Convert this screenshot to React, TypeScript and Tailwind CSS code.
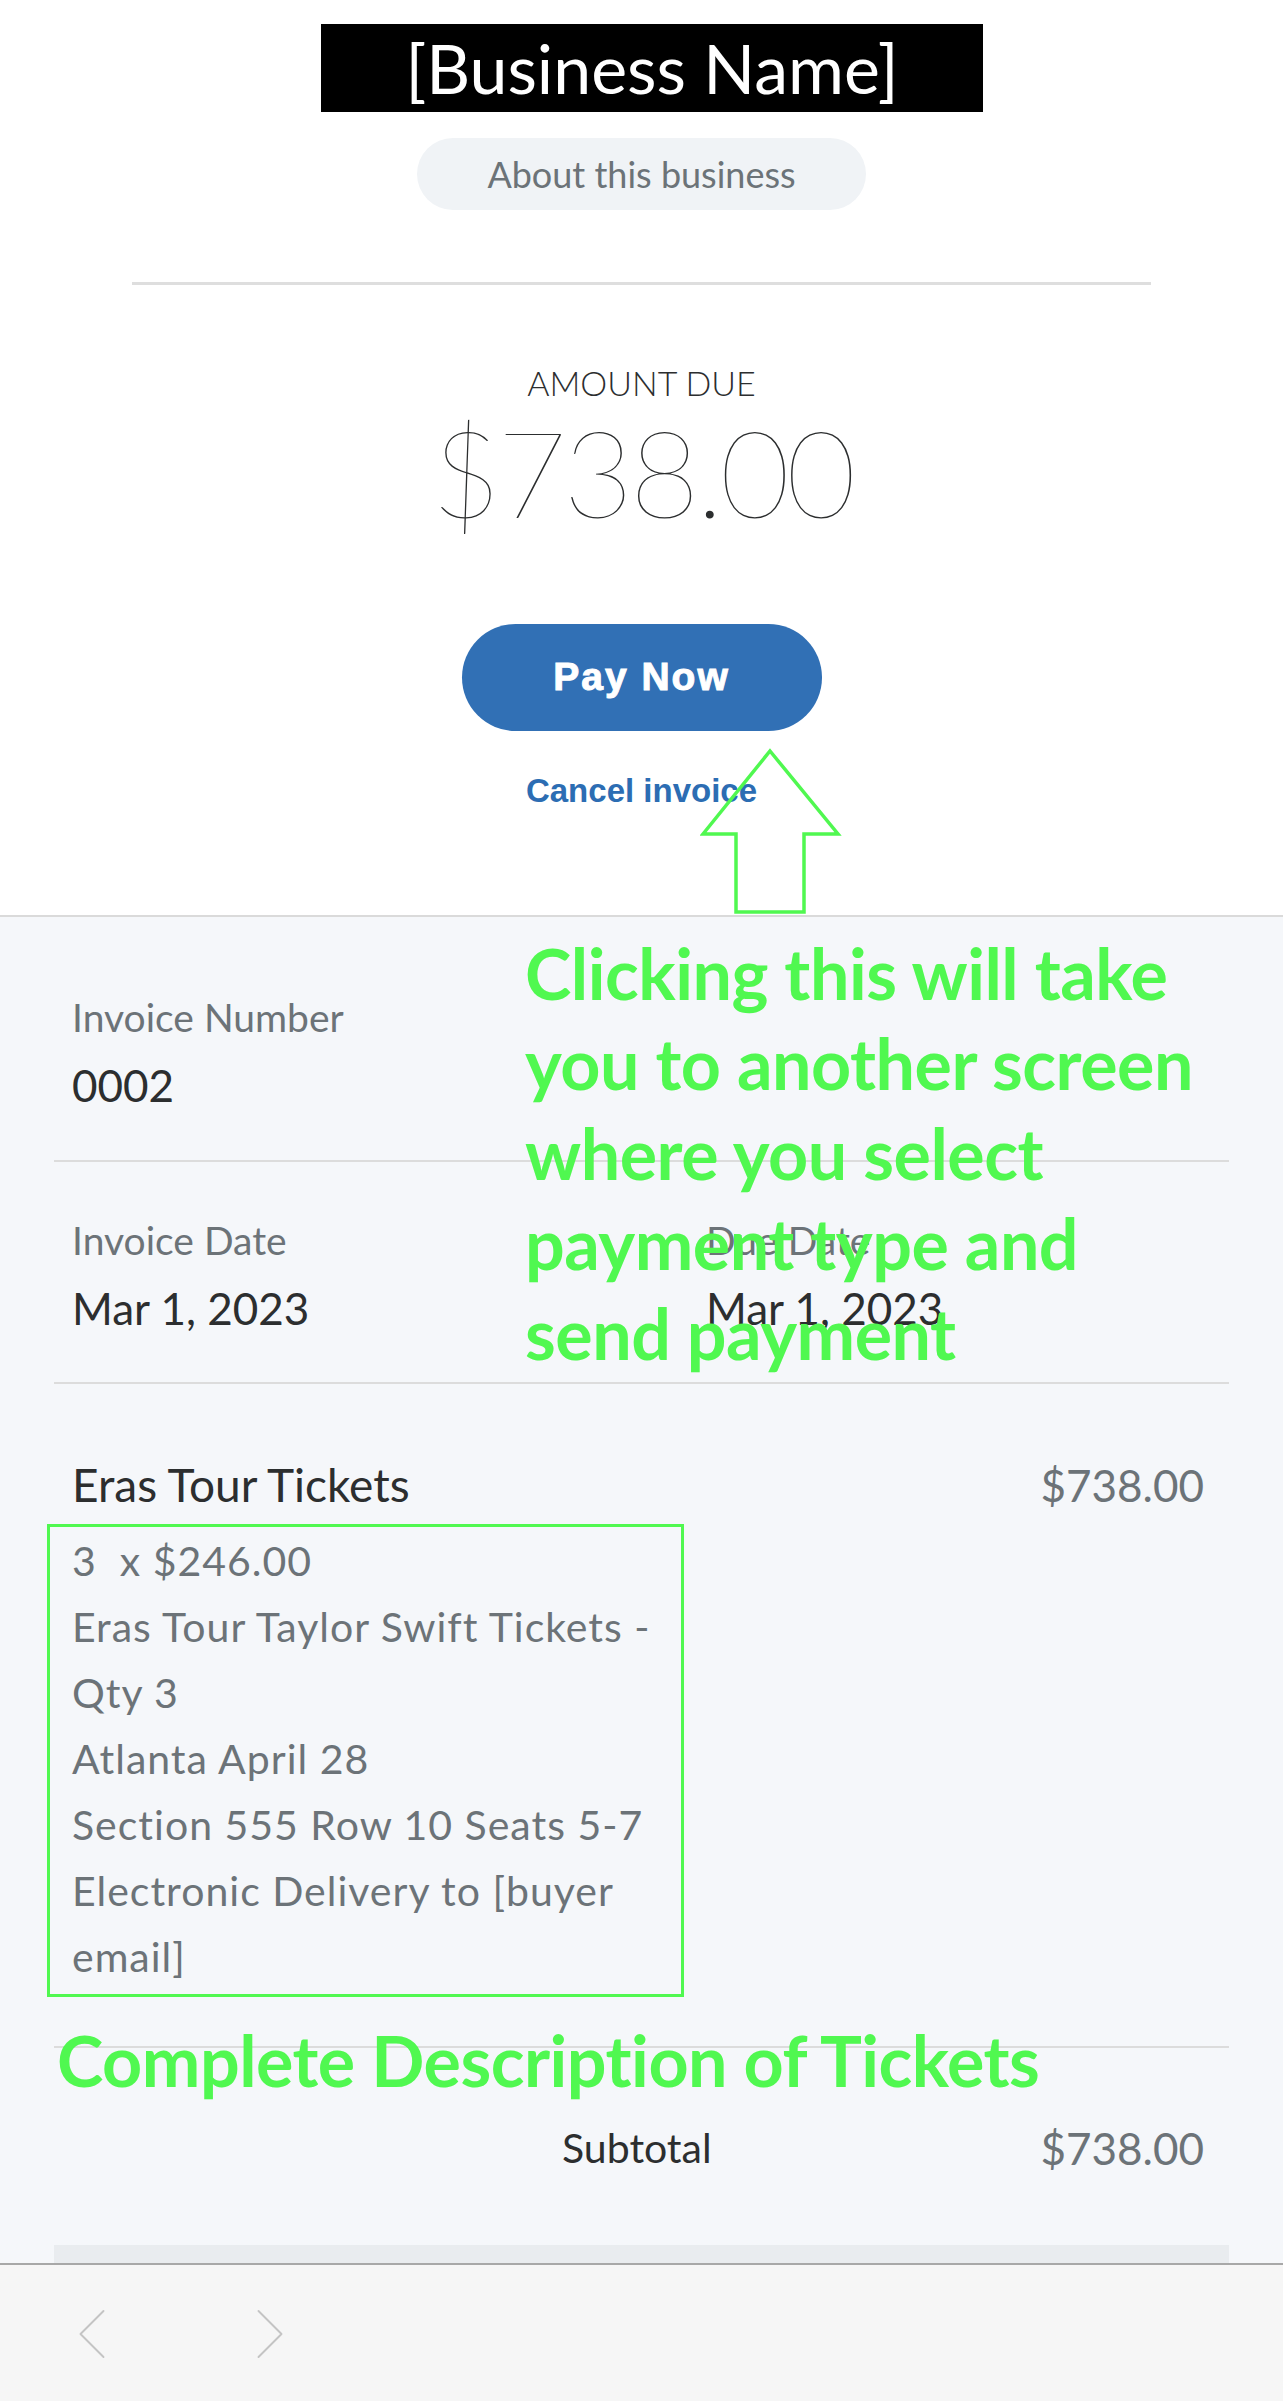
import { ChevronLeft, ChevronRight } from 'lucide-react';

const body = { fontFamily: 'Lato, "Open Sans", sans-serif' };
const arial = { fontFamily: '"Liberation Sans", Arial, sans-serif' };

const lines = [
  '3  x $246.00',
  'Eras Tour Taylor Swift Tickets -',
  'Qty 3',
  'Atlanta April 28',
  'Section 555 Row 10 Seats 5-7',
  'Electronic Delivery to [buyer',
  'email]',
];

const Note = () => (
  <>
    {/* arrow pointing at Pay Now */}
    <svg className="absolute left-[700px] top-[748px]" width="142" height="168" viewBox="0 0 142 168">
      <path d="M70 3 L138 86 L104 86 L104 164 L36 164 L36 86 L3 86 Z" fill="none" stroke="#50f850" strokeWidth="3.5" />
    </svg>
    <div
      className="absolute left-[525px] top-[928px] w-[740px] text-[70px] font-bold leading-[90px] tracking-[-0.5px] text-[#50f850]"
      style={body}
    >
      Clicking this will take<br />you to another screen<br />where you select<br />payment type and<br />send payment
    </div>
    <div
      className="absolute left-[57px] top-[2020px] text-[70px] font-bold leading-[80px] tracking-[-0.5px] text-[#50f850]"
      style={body}
    >
      Complete Description of Tickets
    </div>
  </>
);

export default function App() {
  return (
    <div className="relative flex min-h-[2401px] w-full flex-col bg-white" style={body}>
      <div className="flex flex-col items-center pt-[24px]">
        <div className="ml-[21px] flex h-[88px] w-[662px] items-center justify-center bg-black text-[68px] leading-none text-white">
          [Business Name]
        </div>
        <div className="mt-[26px] flex h-[72px] w-[449px] items-center justify-center rounded-full bg-[#f0f3f6] text-[36px] text-[#6c7378]">
          About this business
        </div>
      </div>
      <div className="mx-[132px] mt-[72px] h-[3px] bg-[#dedede]" />

      <div className="flex flex-col items-center pt-[76px]">
        <div className="text-[34px] font-light leading-[44px] text-[#2c2e2f]">AMOUNT DUE</div>
        <div className="mt-[2px] text-[121px] font-thin leading-[130px] tracking-[-4px] text-[#2c2e2f]">$738.00</div>
        <button
          className="mt-[87px] flex h-[107px] w-[360px] items-center justify-center rounded-full bg-[#3170b5] text-[39px] font-black tracking-[2px] text-white [-webkit-text-stroke:1px_white]"
          style={arial}
        >
          Pay Now
        </button>
        <div className="mt-[40px] text-[33px] font-bold leading-[40px] text-[#2c6db3]" style={arial}>
          Cancel invoice
        </div>
      </div>

      <div className="mt-[104px] flex flex-1 flex-col border-t-2 border-[#dadada] bg-[#f5f7fa]">
        <div className="mx-[54px] flex flex-col">
          <div className="flex h-[243px] flex-col px-[18px] pt-[80px]">
            <div className="text-[39px] leading-[40px] text-[#6c7378]">Invoice Number</div>
            <div className="mt-[24px] text-[44px] leading-[48px] text-[#2c2e2f]">0002</div>
          </div>
          <div className="h-[2px] bg-[#dcdcdc]" />
          <div className="flex h-[220px] px-[18px] pt-[58px]">
            <div className="flex w-[634px] flex-col">
              <div className="text-[39px] leading-[40px] text-[#6c7378]">Invoice Date</div>
              <div className="mt-[24px] text-[44px] leading-[48px] text-[#2c2e2f]">Mar 1, 2023</div>
            </div>
            <div className="flex flex-col">
              <div className="text-[39px] leading-[40px] text-[#6c7378]">Due Date</div>
              <div className="mt-[24px] text-[44px] leading-[48px] text-[#2c2e2f]">Mar 1, 2023</div>
            </div>
          </div>
          <div className="h-[2px] bg-[#dcdcdc]" />
          <div className="flex flex-col pl-[18px] pr-[25px] pt-[77px] pb-[49px]">
            <div className="flex items-center justify-between leading-[48px]">
              <span className="text-[46px] text-[#2c2e2f]">Eras Tour Tickets</span>
              <span className="text-[44px] text-[#6c7378]">$738.00</span>
            </div>
            <div className="-ml-[25px] mt-[15px] w-[637px] border-[3px] border-[#50f850] px-[22px] pt-[1px] pb-[4px]">
              {lines.map((l) => (
                <div key={l} className="whitespace-pre text-[41px] leading-[66px] tracking-[1px] text-[#6c7378]">
                  {l}
                </div>
              ))}
            </div>
          </div>
          <div className="h-[2px] bg-[#dcdcdc]" />
          <div className="flex h-[197px] items-start pl-[18px] pr-[25px] pt-[76px]">
            <span className="ml-[490px] text-[41px] leading-[48px] text-[#2c2e2f]">Subtotal</span>
            <span className="ml-auto text-[44px] leading-[48px] text-[#6c7378]">$738.00</span>
          </div>
          <div className="h-[18px] bg-[#e9ecef]" />
        </div>
        <div className="mt-auto flex h-[140px] items-center gap-[86px] border-t-2 border-[#a8a8a8] bg-[#f6f6f6] pl-[46px]">
          <ChevronLeft size={92} strokeWidth={0.5} className="text-[#c4c4c4]" />
          <ChevronRight size={92} strokeWidth={0.5} className="text-[#c4c4c4]" />
        </div>
      </div>

      <Note />
    </div>
  );
}
